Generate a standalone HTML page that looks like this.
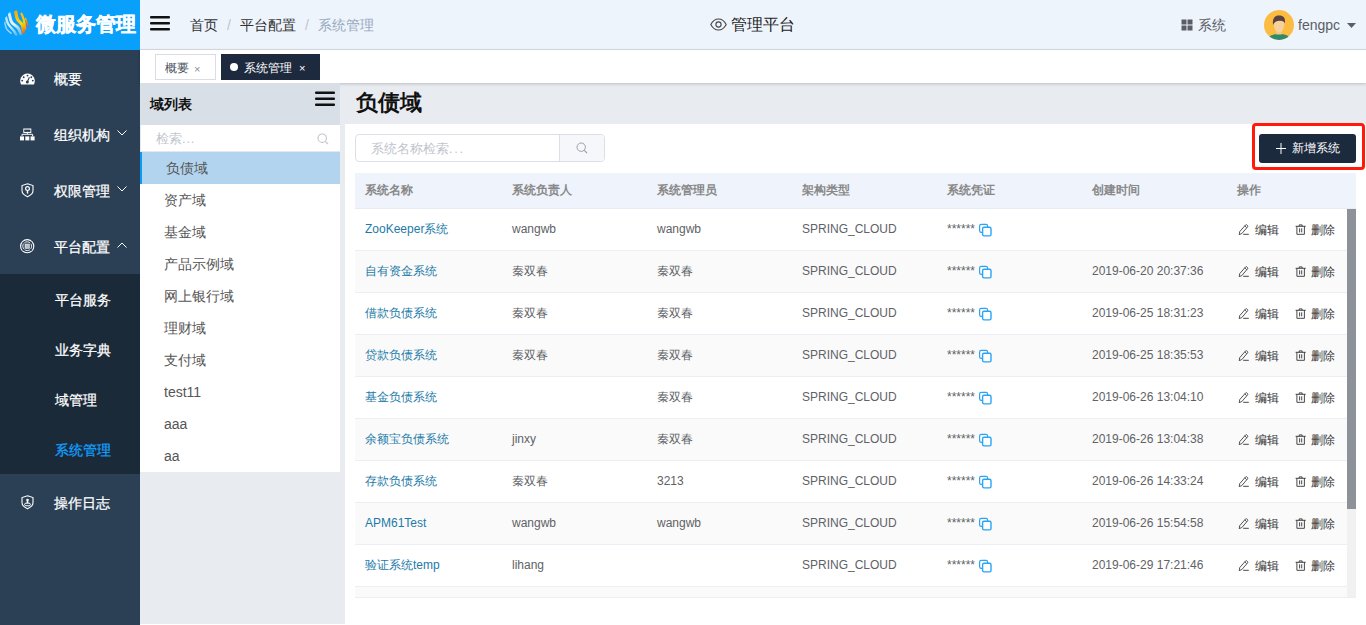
<!DOCTYPE html>
<html><head><meta charset="utf-8">
<style>
*{box-sizing:border-box;margin:0;padding:0}
html,body{width:1366px;height:625px;overflow:hidden;font-family:"Liberation Sans",sans-serif;background:#e8ecf0;position:relative}
.abs{position:absolute}
svg{display:block}
#logo{left:0;top:0;width:140px;height:50px;background:#08a0fb}
#logo .t{left:36px;top:12px;font-size:20px;font-weight:bold;color:#fff;white-space:nowrap;line-height:24px;-webkit-text-stroke:0.4px #fff}
#side{left:0;top:50px;width:140px;height:575px;background:#2b4055}
.mt{position:absolute;left:54px;font-size:14px;line-height:16px;color:#fff;white-space:nowrap;font-weight:500;-webkit-text-stroke:0.25px currentColor}
.mic{position:absolute;left:20px}
.chev{position:absolute;left:117px}
#sub{left:0;top:274px;width:140px;height:200px;background:#1b2a39}
.st{position:absolute;left:55px;font-size:14px;line-height:16px;color:#fff;white-space:nowrap;font-weight:500;-webkit-text-stroke:0.25px currentColor}
#hdr{left:140px;top:0;width:1226px;height:50px;background:#eef4fc;border-bottom:1px solid #dadde2}
.bc{position:absolute;top:17px;font-size:14px;line-height:16px;color:#303133;white-space:nowrap}
.sep{position:absolute;top:17px;font-size:14px;line-height:16px;color:#c0c4cc}
#tabs{left:140px;top:50px;width:1226px;height:33px;background:#fff;box-shadow:0 1px 3px 0 rgba(0,0,0,.18), 0 0 3px 0 rgba(0,0,0,.04)}
.tab{position:absolute;top:4px;height:26px;font-size:12px;line-height:24px;white-space:nowrap}
#dom{left:140px;top:83px;width:200px;height:389px;background:#fff}
#domh{left:0;top:0;width:200px;height:42px;background:#d8dfe6}
.di{position:absolute;left:24px;font-size:14px;line-height:16px;color:#555;white-space:nowrap}
#card{left:345px;top:124px;width:1021px;height:501px;background:#fff}
#tbl{left:355px;top:173px;width:1001px;height:425px;background:#fff;overflow:hidden}
#thd{left:0;top:0;width:1001px;height:36px;background:#eff4fc;border-bottom:1px solid #e6ebf2}
.th{position:absolute;top:10px;font-size:12px;line-height:14px;font-weight:bold;color:#888;white-space:nowrap}
.row{position:absolute;left:0;width:992px;height:42px;border-bottom:1px solid #ebeef5;background:#fff}
.row.s{background:#fafafa}
.c{position:absolute;top:13px;font-size:12px;line-height:14px;color:#606266;white-space:nowrap}
.c.lk{color:#1d7aa8}
.cpw{position:absolute;top:14px}
.op{position:absolute;top:13.5px;font-size:12px;line-height:14px;color:#333;white-space:nowrap}
.op .ic{position:absolute;left:0;top:1.5px}
.op b{position:absolute;left:17px;top:0;font-weight:normal}
#sb{left:992px;top:36px;width:9px;height:388px;background:#f1f1f1}
#sbt{left:0;top:0;width:9px;height:300px;background:#8d9198}
</style></head><body>
<!-- LOGO -->
<div id="logo" class="abs">
 <svg class="abs" style="left:4px;top:10px" width="26" height="26" viewBox="0 0 26 26">
  <defs>
   <clipPath id="lc"><circle cx="13" cy="13" r="12.8"/></clipPath>
   <linearGradient id="gy" gradientUnits="userSpaceOnUse" x1="12" y1="2" x2="20" y2="24"><stop offset="0" stop-color="#ffa80a"/><stop offset="0.55" stop-color="#ffd800"/><stop offset="1" stop-color="#f05a1e"/></linearGradient>
   <linearGradient id="gw" gradientUnits="userSpaceOnUse" x1="3" y1="3" x2="15" y2="25"><stop offset="0" stop-color="#bfe6fb"/><stop offset="0.5" stop-color="#eaf6fd"/><stop offset="1" stop-color="#5bb9e6"/></linearGradient>
  <linearGradient id="gy2" x1="0" y1="0" x2="0" y2="1"><stop offset="0" stop-color="#ffb000"/><stop offset="1" stop-color="#ee5020"/></linearGradient></defs>
  <g clip-path="url(#lc)" fill="none" stroke-linecap="round"><path d="M11.8 2.0 C12.1 3.2 12.3 6.9 13.4 9.1 C14.5 11.2 17.3 12.9 18.3 15.0 C19.3 17.2 19.2 20.9 19.4 22.1" stroke="url(#gy)" stroke-width="3.2" opacity="1"/><path d="M17.5 3.6 C17.9 4.6 19.0 7.1 19.7 9.6 C20.3 12.1 21.0 17.3 21.3 18.9" stroke="url(#gy)" stroke-width="2.2" opacity="1"/><path d="M21.6 8.5 C22.0 9.9 23.8 15.3 24.3 16.7" stroke="url(#gy2)" stroke-width="1.5" opacity="1"/><path d="M5.2 3.6 C5.7 5.1 6.2 10.0 7.7 12.3 C9.1 14.7 12.5 15.9 14.0 17.8 C15.5 19.7 16.2 22.8 16.7 23.7" stroke="url(#gw)" stroke-width="3.0" opacity="1"/><path d="M2.0 7.4 C2.3 8.5 2.9 11.8 4.2 14.0 C5.4 16.1 8.2 18.7 9.6 20.5 C11.0 22.3 11.9 24.1 12.3 24.8" stroke="url(#gw)" stroke-width="2.4" opacity="0.9"/><path d="M0.6 12.3 C0.9 13.4 1.5 17.0 2.5 18.9 C3.6 20.7 6.2 22.5 6.9 23.2" stroke="#a8dcf5" stroke-width="1.8" opacity="0.85"/></g>
 </svg>
 <div class="abs t">微服务管理</div>
</div>
<!-- SIDEBAR -->
<div id="side" class="abs">
</div>
<div id="sub" class="abs"></div>
<div class="abs" style="left:0;top:0;width:140px;height:625px">
 <svg class="mic" style="top:73px" width="15" height="12" viewBox="0 0 15 12"><path d="M1.1 11.4 A7.3 7.3 0 1 1 13.9 11.4 Z" fill="#fff"/><circle cx="7.5" cy="2.6" r="0.95" fill="#2b4055"/><circle cx="3.7" cy="4.2" r="0.95" fill="#2b4055"/><circle cx="11.3" cy="4.2" r="0.95" fill="#2b4055"/><circle cx="2.2" cy="7.6" r="0.95" fill="#2b4055"/><circle cx="12.8" cy="7.6" r="0.95" fill="#2b4055"/><circle cx="7.3" cy="9" r="1.5" fill="#2b4055"/><path d="M7.3 9 L9.4 4.2" stroke="#2b4055" stroke-width="1.1"/></svg>
 <div class="mt" style="top:71px">概要</div>
 <svg class="mic" style="top:128px" width="15" height="13" viewBox="0 0 15 13"><rect x="3.3" y="0.5" width="8" height="4.5" fill="#fff"/><rect x="4.2" y="1.6" width="6.2" height="2.3" fill="#2b4055"/><path d="M7.3 5 V6.3 M2 8.3 V6.3 H12.6 V8.3" fill="none" stroke="#fff" stroke-width="1"/><rect x="0" y="8.4" width="4" height="4" fill="#fff"/><rect x="5.3" y="8.4" width="4" height="4" fill="#fff"/><rect x="10.6" y="8.4" width="4" height="4" fill="#fff"/></svg>
 <div class="mt" style="top:127px">组织机构</div>
 <svg class="chev" style="top:130px" width="10" height="6" viewBox="0 0 10 6"><path d="M0.5 0.5 L5 5 L9.5 0.5" fill="none" stroke="#fff" stroke-width="1"/></svg>
 <svg class="mic" style="top:183px;left:21px" width="13" height="15" viewBox="0 0 13 15"><path d="M6.5 0.8 L12 2.6 V7.6 C12 10.5 9 12.7 6.5 13.7 C4 12.7 1 10.5 1 7.6 V2.6 Z" fill="none" stroke="#fff" stroke-width="1.1"/><circle cx="6.5" cy="5.6" r="1.9" fill="none" stroke="#fff" stroke-width="1.2"/><path d="M6.5 7.4 V10.6" stroke="#fff" stroke-width="1.4"/></svg>
 <div class="mt" style="top:183px">权限管理</div>
 <svg class="chev" style="top:186px" width="10" height="6" viewBox="0 0 10 6"><path d="M0.5 0.5 L5 5 L9.5 0.5" fill="none" stroke="#fff" stroke-width="1"/></svg>
 <svg class="mic" style="top:239px" width="15" height="15" viewBox="0 0 15 15"><circle cx="7.2" cy="7.2" r="6.6" fill="none" stroke="#fff" stroke-width="1.1"/><circle cx="7.2" cy="7.2" r="4.4" fill="none" stroke="#fff" stroke-width="0.9"/><path d="M2.8 2.8 L4.5 4.5 M11.6 2.8 L9.9 4.5 M2.8 11.6 L4.5 9.9 M11.6 11.6 L9.9 9.9" stroke="#2b4055" stroke-width="1.1"/><rect x="5" y="5" width="4.4" height="4.4" fill="#b9bfc7" stroke="#fff" stroke-width="0.5"/></svg>
 <div class="mt" style="top:239px">平台配置</div>
 <svg class="chev" style="top:242px" width="10" height="6" viewBox="0 0 10 6"><path d="M0.5 5.5 L5 1 L9.5 5.5" fill="none" stroke="#fff" stroke-width="1"/></svg>
 <div class="st" style="top:292px">平台服务</div>
 <div class="st" style="top:342px">业务字典</div>
 <div class="st" style="top:392px">域管理</div>
 <div class="st" style="top:442px;color:#12a0ff">系统管理</div>
 <svg class="mic" style="top:495px;left:21px" width="13" height="15" viewBox="0 0 13 15"><path d="M6.5 0.8 L12 2.6 V7.6 C12 10.5 9 12.7 6.5 13.7 C4 12.7 1 10.5 1 7.6 V2.6 Z" fill="none" stroke="#fff" stroke-width="1.1"/><circle cx="6.5" cy="5" r="1.3" fill="#fff"/><path d="M5.8 6 L5.6 8 H7.4 L7.2 6 Z" fill="#fff"/><rect x="3.6" y="8.2" width="5.8" height="2.6" rx="1.3" fill="none" stroke="#fff" stroke-width="1"/></svg>
 <div class="mt" style="top:495px">操作日志</div>
</div>
<!-- HEADER -->
<div id="hdr" class="abs">
 <svg class="abs" style="left:10px;top:15px" width="20" height="16" viewBox="0 0 20 16"><rect x="0" y="1" width="20" height="2.6" rx="1" fill="#111"/><rect x="0" y="7" width="20" height="2.6" rx="1" fill="#111"/><rect x="0" y="13" width="20" height="2.6" rx="1" fill="#111"/></svg>
 <span class="bc" style="left:50px">首页</span>
 <span class="sep" style="left:87px">/</span>
 <span class="bc" style="left:100px">平台配置</span>
 <span class="sep" style="left:165px">/</span>
 <span class="bc" style="left:178px;color:#97a8be">系统管理</span>
 <svg class="abs" style="left:570px;top:18px" width="17" height="13" viewBox="0 0 17 13"><path d="M0.8 6.5 C3 2.3 6 1 8.5 1 C11 1 14 2.3 16.2 6.5 C14 10.7 11 12 8.5 12 C6 12 3 10.7 0.8 6.5 Z" fill="none" stroke="#444" stroke-width="1.1"/><circle cx="8.5" cy="6.5" r="2.6" fill="none" stroke="#444" stroke-width="1.1"/></svg>
 <span class="abs" style="left:591px;top:15px;font-size:16px;line-height:19px;color:#222;white-space:nowrap">管理平台</span>
 <svg class="abs" style="left:1041px;top:19px" width="12" height="12" viewBox="0 0 12 12"><rect x="0.5" y="0.5" width="5" height="5" fill="#5a5e66"/><rect x="6.5" y="0.5" width="5" height="5" fill="#5a5e66"/><rect x="0.5" y="6.5" width="5" height="5" fill="#5a5e66"/><rect x="6.5" y="6.5" width="5" height="5" fill="#5a5e66"/></svg>
 <span class="abs" style="left:1058px;top:17px;font-size:14px;line-height:16px;color:#5a5e66;white-space:nowrap">系统</span>
 <svg class="abs" style="left:1124px;top:10px" width="30" height="30" viewBox="0 0 30 30"><defs><clipPath id="cc"><circle cx="15" cy="15" r="15"/></clipPath></defs><circle cx="15" cy="15" r="15" fill="#fbbc41"/><g clip-path="url(#cc)"><path d="M3.5 30 C4.5 25.5 9 24 15 24 C21 24 25.5 25.5 26.5 30 Z" fill="#2f8a6b"/><rect x="12.3" y="19" width="5.4" height="5.5" fill="#f0c88e"/><path d="M9.6 11 C9.6 19 11.5 22 15 22 C18.5 22 20.4 19 20.4 11 Z" fill="#f5d29b"/><path d="M9 15 C8.4 8 10.5 5.5 15 5.5 C19.5 5.5 21.5 7.5 21 13.5 C20 11.5 18.5 10.5 15.5 10.8 C12.5 11 10.5 12 9 15 Z" fill="#5b4140"/></g></svg>
 <span class="abs" style="left:1158px;top:17px;font-size:14px;line-height:16px;color:#5a5e66;white-space:nowrap">fengpc</span>
 <svg class="abs" style="left:1207px;top:23px" width="9" height="5" viewBox="0 0 9 5"><path d="M0 0 H9 L4.5 5 Z" fill="#5a5e66"/></svg>
</div>
<!-- TABS -->
<div id="tabs" class="abs">
 <div class="tab" style="left:15px;width:61px;border:1px solid #d8dce5;background:#fff;color:#495060">
  <span class="abs" style="left:9px;top:1px">概要</span><span class="abs" style="left:38px;top:2px;color:#8c9099;font-size:11px">×</span>
 </div>
 <div class="tab" style="left:81px;width:99px;background:#1d2a3d;color:#fff">
  <span class="abs" style="left:9px;top:9px;width:8px;height:8px;border-radius:50%;background:#fff"></span>
  <span class="abs" style="left:23px;top:2px">系统管理</span><span class="abs" style="left:78px;top:2px;font-size:11px">×</span>
 </div>
</div>
<!-- DOMAIN PANEL -->
<div id="dom" class="abs">
 <div id="domh" class="abs">
  <span class="abs" style="left:10px;top:13px;font-size:14px;line-height:16px;font-weight:bold;color:#111">域列表</span>
  <svg class="abs" style="left:175px;top:8px" width="20" height="15" viewBox="0 0 20 15"><rect x="0" y="0.6" width="20" height="2.3" rx="1" fill="#111"/><rect x="0" y="6.6" width="20" height="2.3" rx="1" fill="#111"/><rect x="0" y="12.6" width="20" height="2.3" rx="1" fill="#111"/></svg>
 </div>
 <div class="abs" style="left:0;top:42px;width:200px;height:27px;border-bottom:1px solid #e4e7ed;border-left:1px solid #e4e7ed">
  <span class="abs" style="left:15px;top:6px;font-size:13px;line-height:15px;color:#c0c4cc;white-space:nowrap">检索<span style="letter-spacing:0.8px">...</span></span>
  <svg class="abs" style="left:176px;top:8px" width="12" height="12" viewBox="0 0 12 12"><circle cx="5.2" cy="5.2" r="4.2" fill="none" stroke="#c0c4cc" stroke-width="1.1"/><path d="M8.3 8.3 L11 11" stroke="#c0c4cc" stroke-width="1.2"/></svg>
 </div>
 <div class="abs" style="left:0;top:69px;width:200px;height:32px;background:#b3d4ee;border-left:2px solid #0b9cf5">
  <span class="abs" style="left:24px;top:8px;font-size:14px;line-height:16px;color:#555">负债域</span>
 </div>
<div class="di" style="top:109px">资产域</div>
<div class="di" style="top:141px">基金域</div>
<div class="di" style="top:173px">产品示例域</div>
<div class="di" style="top:205px">网上银行域</div>
<div class="di" style="top:237px">理财域</div>
<div class="di" style="top:269px">支付域</div>
<div class="di" style="top:301px">test11</div>
<div class="di" style="top:333px">aaa</div>
<div class="di" style="top:365px">aa</div>
</div>
<!-- MAIN -->
<span class="abs" style="left:356px;top:91px;font-size:22px;line-height:24px;font-weight:bold;color:#111;white-space:nowrap">负债域</span>
<div id="card" class="abs"></div>
<div class="abs" style="left:140px;top:624px;width:205px;height:1px;background:#fff"></div>
<div class="abs" style="left:355px;top:134px;width:250px;height:28px;border:1px solid #dcdfe6;border-radius:4px;background:#fff">
 <span class="abs" style="left:15px;top:6px;font-size:13px;line-height:15px;color:#c0c4cc;white-space:nowrap">系统名称检索<span style="letter-spacing:1.6px">...</span></span>
 <div class="abs" style="left:203px;top:0;width:45px;height:26px;background:#f5f7fa;border-left:1px solid #dcdfe6;border-radius:0 3px 3px 0"></div>
 <svg class="abs" style="left:220px;top:7px" width="12" height="12" viewBox="0 0 12 12"><circle cx="5.2" cy="5.2" r="4.2" fill="none" stroke="#9aa0a8" stroke-width="1"/><path d="M8.3 8.3 L11 11" stroke="#9aa0a8" stroke-width="1.1"/></svg>
</div>
<div class="abs" style="left:1252px;top:123px;width:113px;height:47px;border:3px solid #ff1a0a;border-radius:4px"></div>
<div class="abs" style="left:1259px;top:134px;width:97px;height:29px;background:#1c2a3e;border-radius:3px">
 <svg class="abs" style="left:17px;top:9px" width="10" height="11" viewBox="0 0 10 11"><path d="M5 0 V11 M0 5.5 H10" stroke="#fff" stroke-width="1"/></svg>
 <span class="abs" style="left:33px;top:7px;font-size:12px;line-height:14px;color:#fff;white-space:nowrap">新增系统</span>
</div>
<div id="tbl" class="abs">
 <div id="thd" class="abs">
<span class="th" style="left:10px">系统名称</span>
<span class="th" style="left:157px">系统负责人</span>
<span class="th" style="left:302px">系统管理员</span>
<span class="th" style="left:447px">架构类型</span>
<span class="th" style="left:592px">系统凭证</span>
<span class="th" style="left:737px">创建时间</span>
<span class="th" style="left:882px">操作</span>
 </div>
 <div class="abs" style="left:0;top:0;width:1001px;height:424px">
<div class="row" style="top:36px"><span class="c lk" style="left:10px">ZooKeeper系统</span><span class="c" style="left:157px">wangwb</span><span class="c" style="left:302px">wangwb</span><span class="c" style="left:447px">SPRING_CLOUD</span><span class="c pw" style="left:592px">******</span><span class="cpw" style="left:623px"><svg class="cp" width="14" height="14" viewBox="0 0 14 14"><rect x="1.6" y="1.4" width="8" height="8" rx="1.6" fill="#fff" stroke="#2aa4f4" stroke-width="1.2"/><rect x="4.6" y="4.3" width="8.4" height="8.6" rx="1.4" fill="#fff" stroke="#2aa4f4" stroke-width="1.4"/></svg></span><span class="c" style="left:737px"></span><span class="op" style="left:883px"><svg class="ic" width="12" height="12" viewBox="0 0 12 12"><path d="M1.2 10.6 L1.7 7.7 L7.5 1.0 Q8.2 0.3 8.9 0.9 L9.5 1.5 Q10.1 2.2 9.5 2.9 L3.8 9.6 Z M6.8 1.9 L8.6 3.6" fill="none" stroke="#333" stroke-width="0.85"/><path d="M5.2 10.3 H10.8" stroke="#333" stroke-width="0.9"/></svg><b>编辑</b></span><span class="op" style="left:939px"><svg class="ic" width="12" height="12" viewBox="0 0 12 12"><path d="M1.6 2.3 H11.7 M5.2 2.3 V0.9 H8.1 V2.3 M2.9 2.3 V10.3 H10.4 V2.3 M5.6 4.3 V8.4 M7.7 4.3 V8.4" fill="none" stroke="#333" stroke-width="0.9"/></svg><b>删除</b></span></div>
<div class="row s" style="top:78px"><span class="c lk" style="left:10px">自有资金系统</span><span class="c" style="left:157px">秦双春</span><span class="c" style="left:302px">秦双春</span><span class="c" style="left:447px">SPRING_CLOUD</span><span class="c pw" style="left:592px">******</span><span class="cpw" style="left:623px"><svg class="cp" width="14" height="14" viewBox="0 0 14 14"><rect x="1.6" y="1.4" width="8" height="8" rx="1.6" fill="#fff" stroke="#2aa4f4" stroke-width="1.2"/><rect x="4.6" y="4.3" width="8.4" height="8.6" rx="1.4" fill="#fff" stroke="#2aa4f4" stroke-width="1.4"/></svg></span><span class="c" style="left:737px">2019-06-20 20:37:36</span><span class="op" style="left:883px"><svg class="ic" width="12" height="12" viewBox="0 0 12 12"><path d="M1.2 10.6 L1.7 7.7 L7.5 1.0 Q8.2 0.3 8.9 0.9 L9.5 1.5 Q10.1 2.2 9.5 2.9 L3.8 9.6 Z M6.8 1.9 L8.6 3.6" fill="none" stroke="#333" stroke-width="0.85"/><path d="M5.2 10.3 H10.8" stroke="#333" stroke-width="0.9"/></svg><b>编辑</b></span><span class="op" style="left:939px"><svg class="ic" width="12" height="12" viewBox="0 0 12 12"><path d="M1.6 2.3 H11.7 M5.2 2.3 V0.9 H8.1 V2.3 M2.9 2.3 V10.3 H10.4 V2.3 M5.6 4.3 V8.4 M7.7 4.3 V8.4" fill="none" stroke="#333" stroke-width="0.9"/></svg><b>删除</b></span></div>
<div class="row" style="top:120px"><span class="c lk" style="left:10px">借款负债系统</span><span class="c" style="left:157px">秦双春</span><span class="c" style="left:302px">秦双春</span><span class="c" style="left:447px">SPRING_CLOUD</span><span class="c pw" style="left:592px">******</span><span class="cpw" style="left:623px"><svg class="cp" width="14" height="14" viewBox="0 0 14 14"><rect x="1.6" y="1.4" width="8" height="8" rx="1.6" fill="#fff" stroke="#2aa4f4" stroke-width="1.2"/><rect x="4.6" y="4.3" width="8.4" height="8.6" rx="1.4" fill="#fff" stroke="#2aa4f4" stroke-width="1.4"/></svg></span><span class="c" style="left:737px">2019-06-25 18:31:23</span><span class="op" style="left:883px"><svg class="ic" width="12" height="12" viewBox="0 0 12 12"><path d="M1.2 10.6 L1.7 7.7 L7.5 1.0 Q8.2 0.3 8.9 0.9 L9.5 1.5 Q10.1 2.2 9.5 2.9 L3.8 9.6 Z M6.8 1.9 L8.6 3.6" fill="none" stroke="#333" stroke-width="0.85"/><path d="M5.2 10.3 H10.8" stroke="#333" stroke-width="0.9"/></svg><b>编辑</b></span><span class="op" style="left:939px"><svg class="ic" width="12" height="12" viewBox="0 0 12 12"><path d="M1.6 2.3 H11.7 M5.2 2.3 V0.9 H8.1 V2.3 M2.9 2.3 V10.3 H10.4 V2.3 M5.6 4.3 V8.4 M7.7 4.3 V8.4" fill="none" stroke="#333" stroke-width="0.9"/></svg><b>删除</b></span></div>
<div class="row s" style="top:162px"><span class="c lk" style="left:10px">贷款负债系统</span><span class="c" style="left:157px">秦双春</span><span class="c" style="left:302px">秦双春</span><span class="c" style="left:447px">SPRING_CLOUD</span><span class="c pw" style="left:592px">******</span><span class="cpw" style="left:623px"><svg class="cp" width="14" height="14" viewBox="0 0 14 14"><rect x="1.6" y="1.4" width="8" height="8" rx="1.6" fill="#fff" stroke="#2aa4f4" stroke-width="1.2"/><rect x="4.6" y="4.3" width="8.4" height="8.6" rx="1.4" fill="#fff" stroke="#2aa4f4" stroke-width="1.4"/></svg></span><span class="c" style="left:737px">2019-06-25 18:35:53</span><span class="op" style="left:883px"><svg class="ic" width="12" height="12" viewBox="0 0 12 12"><path d="M1.2 10.6 L1.7 7.7 L7.5 1.0 Q8.2 0.3 8.9 0.9 L9.5 1.5 Q10.1 2.2 9.5 2.9 L3.8 9.6 Z M6.8 1.9 L8.6 3.6" fill="none" stroke="#333" stroke-width="0.85"/><path d="M5.2 10.3 H10.8" stroke="#333" stroke-width="0.9"/></svg><b>编辑</b></span><span class="op" style="left:939px"><svg class="ic" width="12" height="12" viewBox="0 0 12 12"><path d="M1.6 2.3 H11.7 M5.2 2.3 V0.9 H8.1 V2.3 M2.9 2.3 V10.3 H10.4 V2.3 M5.6 4.3 V8.4 M7.7 4.3 V8.4" fill="none" stroke="#333" stroke-width="0.9"/></svg><b>删除</b></span></div>
<div class="row" style="top:204px"><span class="c lk" style="left:10px">基金负债系统</span><span class="c" style="left:157px"></span><span class="c" style="left:302px">秦双春</span><span class="c" style="left:447px">SPRING_CLOUD</span><span class="c pw" style="left:592px">******</span><span class="cpw" style="left:623px"><svg class="cp" width="14" height="14" viewBox="0 0 14 14"><rect x="1.6" y="1.4" width="8" height="8" rx="1.6" fill="#fff" stroke="#2aa4f4" stroke-width="1.2"/><rect x="4.6" y="4.3" width="8.4" height="8.6" rx="1.4" fill="#fff" stroke="#2aa4f4" stroke-width="1.4"/></svg></span><span class="c" style="left:737px">2019-06-26 13:04:10</span><span class="op" style="left:883px"><svg class="ic" width="12" height="12" viewBox="0 0 12 12"><path d="M1.2 10.6 L1.7 7.7 L7.5 1.0 Q8.2 0.3 8.9 0.9 L9.5 1.5 Q10.1 2.2 9.5 2.9 L3.8 9.6 Z M6.8 1.9 L8.6 3.6" fill="none" stroke="#333" stroke-width="0.85"/><path d="M5.2 10.3 H10.8" stroke="#333" stroke-width="0.9"/></svg><b>编辑</b></span><span class="op" style="left:939px"><svg class="ic" width="12" height="12" viewBox="0 0 12 12"><path d="M1.6 2.3 H11.7 M5.2 2.3 V0.9 H8.1 V2.3 M2.9 2.3 V10.3 H10.4 V2.3 M5.6 4.3 V8.4 M7.7 4.3 V8.4" fill="none" stroke="#333" stroke-width="0.9"/></svg><b>删除</b></span></div>
<div class="row s" style="top:246px"><span class="c lk" style="left:10px">余额宝负债系统</span><span class="c" style="left:157px">jinxy</span><span class="c" style="left:302px">秦双春</span><span class="c" style="left:447px">SPRING_CLOUD</span><span class="c pw" style="left:592px">******</span><span class="cpw" style="left:623px"><svg class="cp" width="14" height="14" viewBox="0 0 14 14"><rect x="1.6" y="1.4" width="8" height="8" rx="1.6" fill="#fff" stroke="#2aa4f4" stroke-width="1.2"/><rect x="4.6" y="4.3" width="8.4" height="8.6" rx="1.4" fill="#fff" stroke="#2aa4f4" stroke-width="1.4"/></svg></span><span class="c" style="left:737px">2019-06-26 13:04:38</span><span class="op" style="left:883px"><svg class="ic" width="12" height="12" viewBox="0 0 12 12"><path d="M1.2 10.6 L1.7 7.7 L7.5 1.0 Q8.2 0.3 8.9 0.9 L9.5 1.5 Q10.1 2.2 9.5 2.9 L3.8 9.6 Z M6.8 1.9 L8.6 3.6" fill="none" stroke="#333" stroke-width="0.85"/><path d="M5.2 10.3 H10.8" stroke="#333" stroke-width="0.9"/></svg><b>编辑</b></span><span class="op" style="left:939px"><svg class="ic" width="12" height="12" viewBox="0 0 12 12"><path d="M1.6 2.3 H11.7 M5.2 2.3 V0.9 H8.1 V2.3 M2.9 2.3 V10.3 H10.4 V2.3 M5.6 4.3 V8.4 M7.7 4.3 V8.4" fill="none" stroke="#333" stroke-width="0.9"/></svg><b>删除</b></span></div>
<div class="row" style="top:288px"><span class="c lk" style="left:10px">存款负债系统</span><span class="c" style="left:157px">秦双春</span><span class="c" style="left:302px">3213</span><span class="c" style="left:447px">SPRING_CLOUD</span><span class="c pw" style="left:592px">******</span><span class="cpw" style="left:623px"><svg class="cp" width="14" height="14" viewBox="0 0 14 14"><rect x="1.6" y="1.4" width="8" height="8" rx="1.6" fill="#fff" stroke="#2aa4f4" stroke-width="1.2"/><rect x="4.6" y="4.3" width="8.4" height="8.6" rx="1.4" fill="#fff" stroke="#2aa4f4" stroke-width="1.4"/></svg></span><span class="c" style="left:737px">2019-06-26 14:33:24</span><span class="op" style="left:883px"><svg class="ic" width="12" height="12" viewBox="0 0 12 12"><path d="M1.2 10.6 L1.7 7.7 L7.5 1.0 Q8.2 0.3 8.9 0.9 L9.5 1.5 Q10.1 2.2 9.5 2.9 L3.8 9.6 Z M6.8 1.9 L8.6 3.6" fill="none" stroke="#333" stroke-width="0.85"/><path d="M5.2 10.3 H10.8" stroke="#333" stroke-width="0.9"/></svg><b>编辑</b></span><span class="op" style="left:939px"><svg class="ic" width="12" height="12" viewBox="0 0 12 12"><path d="M1.6 2.3 H11.7 M5.2 2.3 V0.9 H8.1 V2.3 M2.9 2.3 V10.3 H10.4 V2.3 M5.6 4.3 V8.4 M7.7 4.3 V8.4" fill="none" stroke="#333" stroke-width="0.9"/></svg><b>删除</b></span></div>
<div class="row s" style="top:330px"><span class="c lk" style="left:10px">APM61Test</span><span class="c" style="left:157px">wangwb</span><span class="c" style="left:302px">wangwb</span><span class="c" style="left:447px">SPRING_CLOUD</span><span class="c pw" style="left:592px">******</span><span class="cpw" style="left:623px"><svg class="cp" width="14" height="14" viewBox="0 0 14 14"><rect x="1.6" y="1.4" width="8" height="8" rx="1.6" fill="#fff" stroke="#2aa4f4" stroke-width="1.2"/><rect x="4.6" y="4.3" width="8.4" height="8.6" rx="1.4" fill="#fff" stroke="#2aa4f4" stroke-width="1.4"/></svg></span><span class="c" style="left:737px">2019-06-26 15:54:58</span><span class="op" style="left:883px"><svg class="ic" width="12" height="12" viewBox="0 0 12 12"><path d="M1.2 10.6 L1.7 7.7 L7.5 1.0 Q8.2 0.3 8.9 0.9 L9.5 1.5 Q10.1 2.2 9.5 2.9 L3.8 9.6 Z M6.8 1.9 L8.6 3.6" fill="none" stroke="#333" stroke-width="0.85"/><path d="M5.2 10.3 H10.8" stroke="#333" stroke-width="0.9"/></svg><b>编辑</b></span><span class="op" style="left:939px"><svg class="ic" width="12" height="12" viewBox="0 0 12 12"><path d="M1.6 2.3 H11.7 M5.2 2.3 V0.9 H8.1 V2.3 M2.9 2.3 V10.3 H10.4 V2.3 M5.6 4.3 V8.4 M7.7 4.3 V8.4" fill="none" stroke="#333" stroke-width="0.9"/></svg><b>删除</b></span></div>
<div class="row" style="top:372px"><span class="c lk" style="left:10px">验证系统temp</span><span class="c" style="left:157px">lihang</span><span class="c" style="left:302px"></span><span class="c" style="left:447px">SPRING_CLOUD</span><span class="c pw" style="left:592px">******</span><span class="cpw" style="left:623px"><svg class="cp" width="14" height="14" viewBox="0 0 14 14"><rect x="1.6" y="1.4" width="8" height="8" rx="1.6" fill="#fff" stroke="#2aa4f4" stroke-width="1.2"/><rect x="4.6" y="4.3" width="8.4" height="8.6" rx="1.4" fill="#fff" stroke="#2aa4f4" stroke-width="1.4"/></svg></span><span class="c" style="left:737px">2019-06-29 17:21:46</span><span class="op" style="left:883px"><svg class="ic" width="12" height="12" viewBox="0 0 12 12"><path d="M1.2 10.6 L1.7 7.7 L7.5 1.0 Q8.2 0.3 8.9 0.9 L9.5 1.5 Q10.1 2.2 9.5 2.9 L3.8 9.6 Z M6.8 1.9 L8.6 3.6" fill="none" stroke="#333" stroke-width="0.85"/><path d="M5.2 10.3 H10.8" stroke="#333" stroke-width="0.9"/></svg><b>编辑</b></span><span class="op" style="left:939px"><svg class="ic" width="12" height="12" viewBox="0 0 12 12"><path d="M1.6 2.3 H11.7 M5.2 2.3 V0.9 H8.1 V2.3 M2.9 2.3 V10.3 H10.4 V2.3 M5.6 4.3 V8.4 M7.7 4.3 V8.4" fill="none" stroke="#333" stroke-width="0.9"/></svg><b>删除</b></span></div>
<div class="row s" style="top:414px"></div>
 </div>
 <div id="sb" class="abs"><div id="sbt" class="abs"></div></div>
 <div class="abs" style="left:0;top:424px;width:1001px;height:1px;background:#ebeef5"></div>
</div>
</body></html>
